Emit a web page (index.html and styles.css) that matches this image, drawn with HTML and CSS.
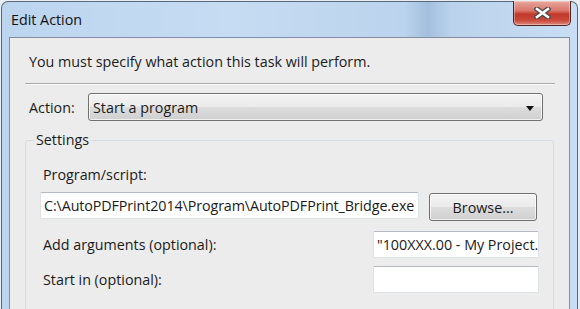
FILE: index.html
```html
<!DOCTYPE html>
<html lang="en">
<head>
  <meta charset="UTF-8" />
  <title>Edit Action</title>
  <link rel="stylesheet" href="styles.css">
</head>
<body>

<div class="window">
  <div class="titlebar">
    <span class="title">Edit Action</span>
    <button class="close" title="Close">
      <svg width="17" height="12" viewBox="0 0 17 12">
        <path d="M3 2 L14 10 M14 2 L3 10" stroke="#4a4a4a" stroke-width="5" stroke-linecap="square" fill="none"/>
        <path d="M3 2 L14 10 M14 2 L3 10" stroke="#ffffff" stroke-width="2.6" stroke-linecap="square" fill="none"/>
      </svg>
    </button>
  </div>

  <div class="client">
    <p class="intro">You must specify what action this task will perform.</p>
    <div class="sep"></div>

    <div class="action-row">
      <span class="action-label">Action:</span>
      <div class="combo">
        <span>Start a program</span>
        <span class="arrow"></span>
      </div>
    </div>

    <fieldset class="settings">
      <legend>Settings</legend>
      <div class="field-label">Program/script:</div>
      <div class="program-row">
        <div class="textbox wide">C:\AutoPDFPrint2014\Program\AutoPDFPrint_Bridge.exe</div>
        <button class="btn">Browse...</button>
      </div>
      <div class="opt-row">
        <span class="opt-label">Add arguments (optional):</span>
        <div class="textbox short">"100XXX.00 - My Project.</div>
      </div>
      <div class="opt-row">
        <span class="opt-label">Start in (optional):</span>
        <div class="textbox short"></div>
      </div>
    </fieldset>
  </div>
</div>

</body>
</html>
```

FILE: styles.css
```css
html, body {
  margin: 0;
  padding: 0;
  height: 100%;
  overflow: hidden;
}

body {
  background: #e9eef4;
  font-family: "Open Sans", "Noto Sans", sans-serif;
  font-size: 14.3px;
  color: #1b1b1b;
}

.window {
  margin: 1px 0 0 1px;
  width: 577px;
  height: 308px;
  display: flex;
  flex-direction: column;
  border: 1px solid #56687c;
  border-bottom: none;
  border-radius: 7px 7px 0 0;
  background: linear-gradient(to right, #bcd5ee 0%, #c5dcf3 40%, #bbd3ec 70%, #a3bfdf 74%, #bad2eb 78%, #c8def4 100%);
  box-sizing: border-box;
}

.titlebar {
  height: 35px;
  flex: none;
  display: flex;
  align-items: flex-start;
  padding-left: 9px;
  padding-right: 6px;
}

.title {
  line-height: 20px;
  margin-top: 8px;
  color: #111;
}

.close {
  margin-left: auto;
  margin-top: -1px;
  width: 58px;
  height: 25px;
  padding: 0;
  border: 1px solid #4f2620;
  border-top: none;
  border-radius: 0 0 5px 5px;
  background: linear-gradient(to bottom, #e8a99e 0%, #d9776a 40%, #c2392b 55%, #c8483a 80%, #dd8a7c 100%);
  box-shadow: inset 0 0 0 1px rgba(255, 255, 255, 0.35);
  display: flex;
  align-items: center;
  justify-content: center;
}

.client {
  flex: 1;
  margin: 0 7px;
  overflow: hidden;
  background: #ececec;
  border: 1px solid #7f8fa3;
  border-bottom: none;
  padding: 14px 13px 0 15px;
}

.intro {
  margin: 0 0 0 4px;
  line-height: 20px;
}

.sep {
  margin-top: 11px;
  margin-right: 1px;
  border-top: 1px solid #a8a8a8;
  border-bottom: 1px solid #ffffff;
}

.action-row {
  display: flex;
  align-items: center;
  margin-top: 8px;
}

.action-label {
  width: 59px;
  margin-left: 4px;
}

.combo, .btn {
  border: 1px solid #707070;
  border-radius: 3px;
  background: linear-gradient(to bottom, #f3f3f3 0%, #ebebeb 48%, #dddddd 52%, #cfcfcf 100%);
  box-shadow: inset 0 0 0 1px rgba(255, 255, 255, 0.7);
  box-sizing: border-box;
}

.combo {
  width: 455px;
  height: 28px;
  display: flex;
  align-items: center;
  justify-content: space-between;
  padding: 0 8px 0 4px;
}

.arrow {
  width: 0;
  height: 0;
  border-left: 4px solid transparent;
  border-right: 4px solid transparent;
  border-top: 5px solid #111;
  margin-top: 2px;
}

.settings {
  margin: 9px 2px 0 0;
  padding: 15px 14px 20px 14px;
  border: 1px solid #d3dce4;
  border-radius: 3px;
  height: 200px;
}

.settings legend {
  margin-left: -6px;
  padding: 0 2px;
  line-height: 20px;
}

.field-label {
  margin-left: 3px;
  line-height: 20px;
}

.program-row {
  display: flex;
  align-items: flex-start;
  margin-top: 7px;
}

.textbox {
  height: 27px;
  box-sizing: border-box;
  background: #ffffff;
  border: 1px solid #dde2e8;
  border-top-color: #b5bac2;
  border-radius: 2px;
  padding: 0 3px;
  line-height: 25px;
  white-space: nowrap;
  overflow: hidden;
}

.wide {
  width: 379px;
  letter-spacing: -0.1px;
}

.short {
  width: 166px;
}

.btn {
  width: 108px;
  height: 28px;
  margin: 1px 0 0 10px;
  font-family: inherit;
  font-size: inherit;
  color: inherit;
  padding: 0;
}

.opt-row {
  display: flex;
  align-items: center;
  justify-content: space-between;
  margin-top: 10px;
}

.opt-row + .opt-row {
  margin-top: 8px;
}

.opt-label {
  margin-left: 3px;
}
```
